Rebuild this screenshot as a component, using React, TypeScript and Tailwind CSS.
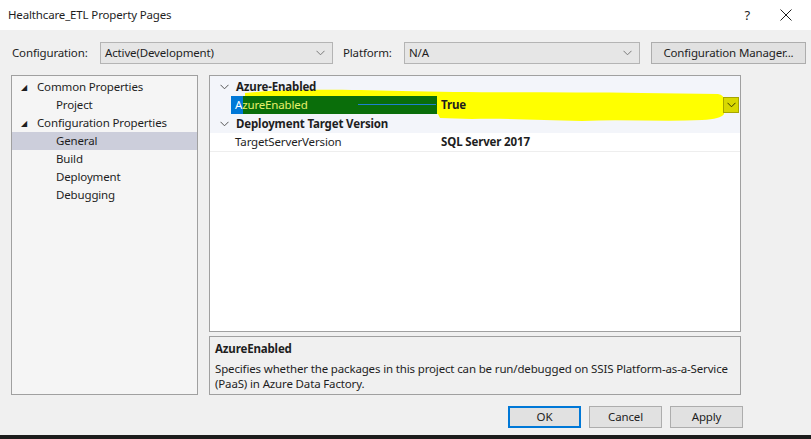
import React from "react";

const font = { fontFamily: "'Noto Sans', 'Open Sans', sans-serif" };

function Chevron({ className = "" }: { className?: string }) {
  return (
    <svg width="9" height="6" viewBox="0 0 9 6" className={className} aria-hidden>
      <path d="M0.5 0.8 L4.5 4.8 L8.5 0.8" fill="none" stroke="currentColor" strokeWidth="1" />
    </svg>
  );
}

function Combo({ value, width }: { value: string; width: string }) {
  return (
    <div className={`flex h-[22px] ${width} items-center justify-between border border-[#b4b4b4] bg-[#e6e6e6] pl-[4px] pr-[7px] text-[#1e1e1e]`}>
      <span>{value}</span>
      <Chevron className="text-[#7a7a7a]" />
    </div>
  );
}

function TreeItem({ label, level, expanded, selected }: { label: string; level: number; expanded?: boolean; selected?: boolean }) {
  return (
    <div className={`flex h-[18px] items-center ${selected ? "bg-[#cccedb]" : ""}`}>
      {level === 0 ? (
        <span className="ml-[9px] mr-[5px] w-[11px] text-[8px] leading-none text-[#1e1e1e]">{expanded ? "◢" : "▷"}</span>
      ) : (
        <span className="w-[44px]" />
      )}
      <span className="text-[#1e1e1e]">{label}</span>
    </div>
  );
}

function CategoryRow({ label }: { label: string }) {
  return (
    <div className="flex h-[19px] items-center">
      <span className="flex w-[26px] justify-center pl-[2px] text-[#555]">
        <Chevron />
      </span>
      <span className="font-bold text-[#1e1e1e]">{label}</span>
    </div>
  );
}

function Button({ label, primary }: { label: string; primary?: boolean }) {
  return (
    <div
      className={`flex h-[22px] w-[73px] items-center justify-center bg-[#e1e1e1] text-[#1e1e1e] ${
        primary ? "border-2 border-[#0078d7]" : "border border-[#adadad]"
      }`}
    >
      {label}
    </div>
  );
}

export default function App() {
  return (
    <div
      className="flex h-[439px] w-[811px] flex-col overflow-hidden bg-[#f0f0f0] text-[11.5px] leading-none tracking-[-0.15px]"
      style={font}
    >
      {/* title bar */}
      <div className="flex h-[30px] shrink-0 items-center justify-between bg-white pl-[8px] pr-[19px]">
        <span className="text-[#1e1e1e]">Healthcare_ETL Property Pages</span>
        <div className="flex items-center gap-[30px] text-[#1e1e1e]">
          <span className="text-[13px]">?</span>
          <svg width="12" height="12" viewBox="0 0 12 12" aria-hidden>
            <path d="M0.5 0.5 L11.5 11.5 M11.5 0.5 L0.5 11.5" stroke="#1e1e1e" strokeWidth="1" />
          </svg>
        </div>
      </div>

      {/* configuration row */}
      <div className="mt-[12px] flex h-[22px] shrink-0 items-center pl-[12px]">
        <span className="w-[88px] text-[#1e1e1e]">Configuration:</span>
        <Combo value="Active(Development)" width="w-[233px]" />
        <span className="ml-[10px] w-[61px] text-[#1e1e1e]">Platform:</span>
        <Combo value="N/A" width="w-[236px]" />
        <div className="ml-[11px] flex h-[22px] w-[155px] items-center justify-center border border-[#adadad] bg-[#e1e1e1] text-[#1e1e1e]">
          Configuration Manager...
        </div>
      </div>

      {/* main area */}
      <div className="mt-[11px] flex shrink-0 gap-[11px] pl-[11px]">
        <div className="h-[320px] w-[187px] border border-[#a0a0a0] bg-[#f5f5f5] pt-[2px]">
          <TreeItem label="Common Properties" level={0} expanded />
          <TreeItem label="Project" level={1} />
          <TreeItem label="Configuration Properties" level={0} expanded />
          <TreeItem label="General" level={1} selected />
          <TreeItem label="Build" level={1} />
          <TreeItem label="Deployment" level={1} />
          <TreeItem label="Debugging" level={1} />
        </div>

        <div className="flex w-[532px] flex-col gap-[4px]">
          <div className="relative h-[257px] border border-[#a0a0a0] bg-white">
            <div className="absolute left-0 right-0 top-0 h-[57px] bg-[#f3f5fa]" />
            <svg className="absolute left-0 top-0" width="530" height="60" viewBox="208 75 530 60" aria-hidden>
              <path
                d="M243 92 C280 88 330 88 400 90 C470 92 560 91 640 92 L716 93 Q722 94 722 99 L722 113 Q719 118 700 119 C660 121 620 118 580 120 C540 119 500 117 470 118 L438 117 L436 113 L243 113 Z"
                fill="#ffff00"
              />
            </svg>
            <div className="relative pt-[1px]">
              <CategoryRow label="Azure-Enabled" />
              <div className="relative flex h-[18px] items-center">
                <div className="relative ml-[21px] flex h-[18px] w-[206px] items-center bg-[#0a6e0a]">
                  <div className="absolute left-0 top-0 h-full w-[12px] bg-[#0078d7]" />
                  <div className="absolute left-[127px] top-[8px] h-[1px] w-[78px] bg-[#1e7fd0]" />
                  <span className="relative pl-[4px]">
                    <span className="text-white">A</span>
                    <span className="text-[#e8f06a]">zureEnabled</span>
                  </span>
                </div>
                <span className="ml-[4px] font-bold text-[#1e1e1e]">True</span>
                <div className="absolute left-[513px] top-[1px] flex h-[16px] w-[16px] items-center justify-center border border-[#a6a600] bg-[#d8d800] text-[#3a3a00]">
                  <Chevron />
                </div>
              </div>
              <CategoryRow label="Deployment Target Version" />
              <div className="flex h-[19px] items-center border-b border-[#eeeeee] bg-white">
                <span className="ml-[25px] w-[206px] text-[#1e1e1e]">TargetServerVersion</span>
                <span className="font-bold text-[#1e1e1e]">SQL Server 2017</span>
              </div>
            </div>
          </div>

          <div className="h-[59px] border border-[#a0a0a0] bg-[#f0f0f0] px-[5px] pt-[6px] text-[#1e1e1e]">
            <div className="font-bold">AzureEnabled</div>
            <div className="mt-[6px] leading-[15px]">
              Specifies whether the packages in this project can be run/debugged on SSIS Platform-as-a-Service (PaaS) in Azure Data Factory.
            </div>
          </div>
        </div>
      </div>

      {/* buttons */}
      <div className="mt-[11px] flex shrink-0 gap-[8px] pl-[508px]">
        <Button label="OK" primary />
        <Button label="Cancel" />
        <Button label="Apply" />
      </div>

      <div className="mt-[7px] h-[10px] shrink-0 bg-[#1c1c1c]" />
    </div>
  );
}
